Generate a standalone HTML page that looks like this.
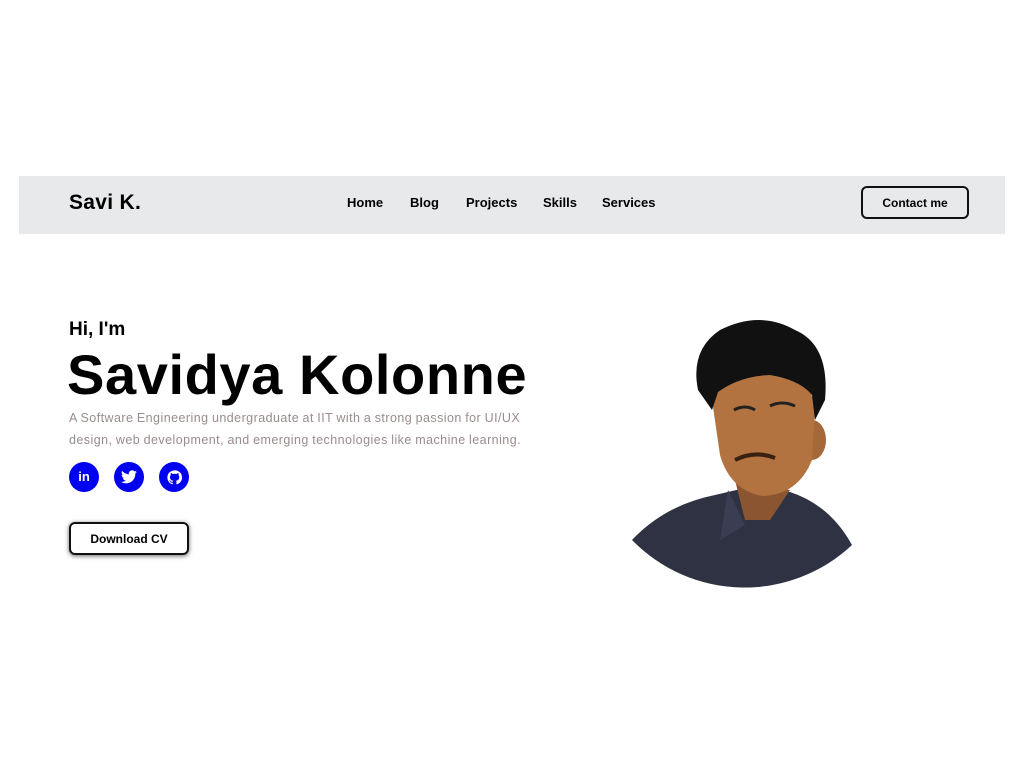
<!DOCTYPE html>
<html><head><meta charset="utf-8"><style>
*{margin:0;padding:0;box-sizing:border-box}
body{width:1024px;height:768px;background:#fff;font-family:"Liberation Sans",sans-serif;position:relative;overflow:hidden;color:#000}
.nav{position:absolute;left:19px;top:176px;width:986px;height:58px;background:#e8e9eb}
.logo{position:absolute;left:50px;top:15px;font-size:21px;font-weight:bold;letter-spacing:0.3px}
.links{position:absolute;top:19px;font-size:13px;font-weight:bold}
.links span{position:absolute;white-space:nowrap}
.contact{position:absolute;left:842px;top:10px;width:108px;height:33px;border:2px solid #111;border-radius:6px;font-size:12px;font-weight:bold;text-align:center;line-height:30px}
.hi{position:absolute;left:69px;top:319px;font-size:19px;font-weight:bold}
.name{position:absolute;left:67px;top:342px;font-size:56px;font-weight:bold;letter-spacing:0.6px}
.desc{position:absolute;left:69px;top:407px;font-size:12.5px;color:#9a8c8c;line-height:22px;width:470px;letter-spacing:0.45px;word-spacing:-0.5px}
.ic{position:absolute;top:462px;width:30px;height:30px;border-radius:50%;background:#0000f0;color:#fff;font-weight:bold;font-size:13px;text-align:center;line-height:30px}
.dl{position:absolute;left:69px;top:522px;width:120px;height:33px;border:2px solid #111;border-radius:6px;font-size:12px;font-weight:bold;text-align:center;line-height:30px;box-shadow:0 1px 5px rgba(0,0,0,.6)}
</style></head><body>
<div class="nav">
<div class="logo">Savi K.</div>
<div class="links"><span style="left:328px">Home</span><span style="left:391px">Blog</span><span style="left:447px">Projects</span><span style="left:524px">Skills</span><span style="left:583px">Services</span></div>
<div class="contact">Contact me</div>
</div>
<div class="hi">Hi, I'm</div>
<div class="name">Savidya Kolonne</div>
<div class="desc">A Software Engineering undergraduate at IIT with a strong passion for UI/UX<br>design, web development, and emerging technologies like machine learning.</div>
<div class="ic" style="left:69px">in</div>
<div class="ic" style="left:114px"><svg width="16" height="14" viewBox="0 0 24 20" style="margin-top:8px"><path fill="#fff" d="M24 2.4a10 10 0 0 1-2.8.8A5 5 0 0 0 23.3.4a10 10 0 0 1-3.1 1.2A4.9 4.9 0 0 0 11.8 6 14 14 0 0 1 1.7.9a4.9 4.9 0 0 0 1.5 6.6A4.9 4.9 0 0 1 1 6.9a4.9 4.9 0 0 0 3.9 4.8 5 5 0 0 1-2.2.1 4.9 4.9 0 0 0 4.6 3.4A9.9 9.9 0 0 1 0 17.3 14 14 0 0 0 7.5 19.5c9 0 14-7.5 14-14v-.6A10 10 0 0 0 24 2.4z"/></svg></div>
<div class="ic" style="left:159px"><svg width="15" height="15" viewBox="0 0 24 24" style="margin-top:7.5px"><path fill="#fff" d="M12 .5a11.5 11.5 0 0 0-3.6 22.4c.6.1.8-.3.8-.6v-2c-3.2.7-3.9-1.5-3.9-1.5-.5-1.3-1.3-1.7-1.3-1.7-1-.7.1-.7.1-.7 1.2.1 1.8 1.2 1.8 1.2 1 1.8 2.8 1.3 3.4 1 .1-.8.4-1.3.8-1.6-2.6-.3-5.3-1.3-5.3-5.7 0-1.3.5-2.3 1.2-3.1-.1-.3-.5-1.5.1-3.1 0 0 1-.3 3.2 1.2a11 11 0 0 1 5.8 0C17.3 4.8 18.3 5.1 18.3 5.1c.6 1.6.2 2.8.1 3.1.8.8 1.2 1.9 1.2 3.1 0 4.4-2.7 5.4-5.3 5.7.4.4.8 1.1.8 2.2v3.2c0 .3.2.7.8.6A11.5 11.5 0 0 0 12 .5z"/></svg></div>
<div class="dl">Download CV</div>
<svg style="position:absolute;left:600px;top:300px" width="280" height="300" viewBox="600 300 280 300">
<path d="M632 540 Q665 505 715 495 L745 488 L790 492 Q830 505 852 545 A157 157 0 0 1 632 540Z" fill="#2f3242"/>
<path d="M735 480 L745 520 L770 520 L790 490 Z" fill="#8a5530"/>
<path d="M728 490 L745 525 L720 540 Z" fill="#3a3e52"/>
<ellipse cx="812" cy="440" rx="14" ry="20" fill="#a5683a"/>
<path d="M712 400 Q712 370 760 368 Q812 370 815 410 L812 460 Q798 495 762 496 Q730 490 720 455 Z" fill="#b27340"/>
<path d="M698 390 Q690 350 720 330 Q760 310 795 330 Q830 345 825 400 L815 420 L812 395 Q800 380 770 375 Q740 376 718 392 L712 410 Z" fill="#111"/>
<path d="M734 410 Q745 404 755 410" stroke="#222" stroke-width="3" fill="none"/>
<path d="M770 406 Q782 400 795 406" stroke="#222" stroke-width="3" fill="none"/>
<path d="M735 460 Q755 450 775 458" stroke="#3a2010" stroke-width="4" fill="none"/>
</svg>
</body></html>
